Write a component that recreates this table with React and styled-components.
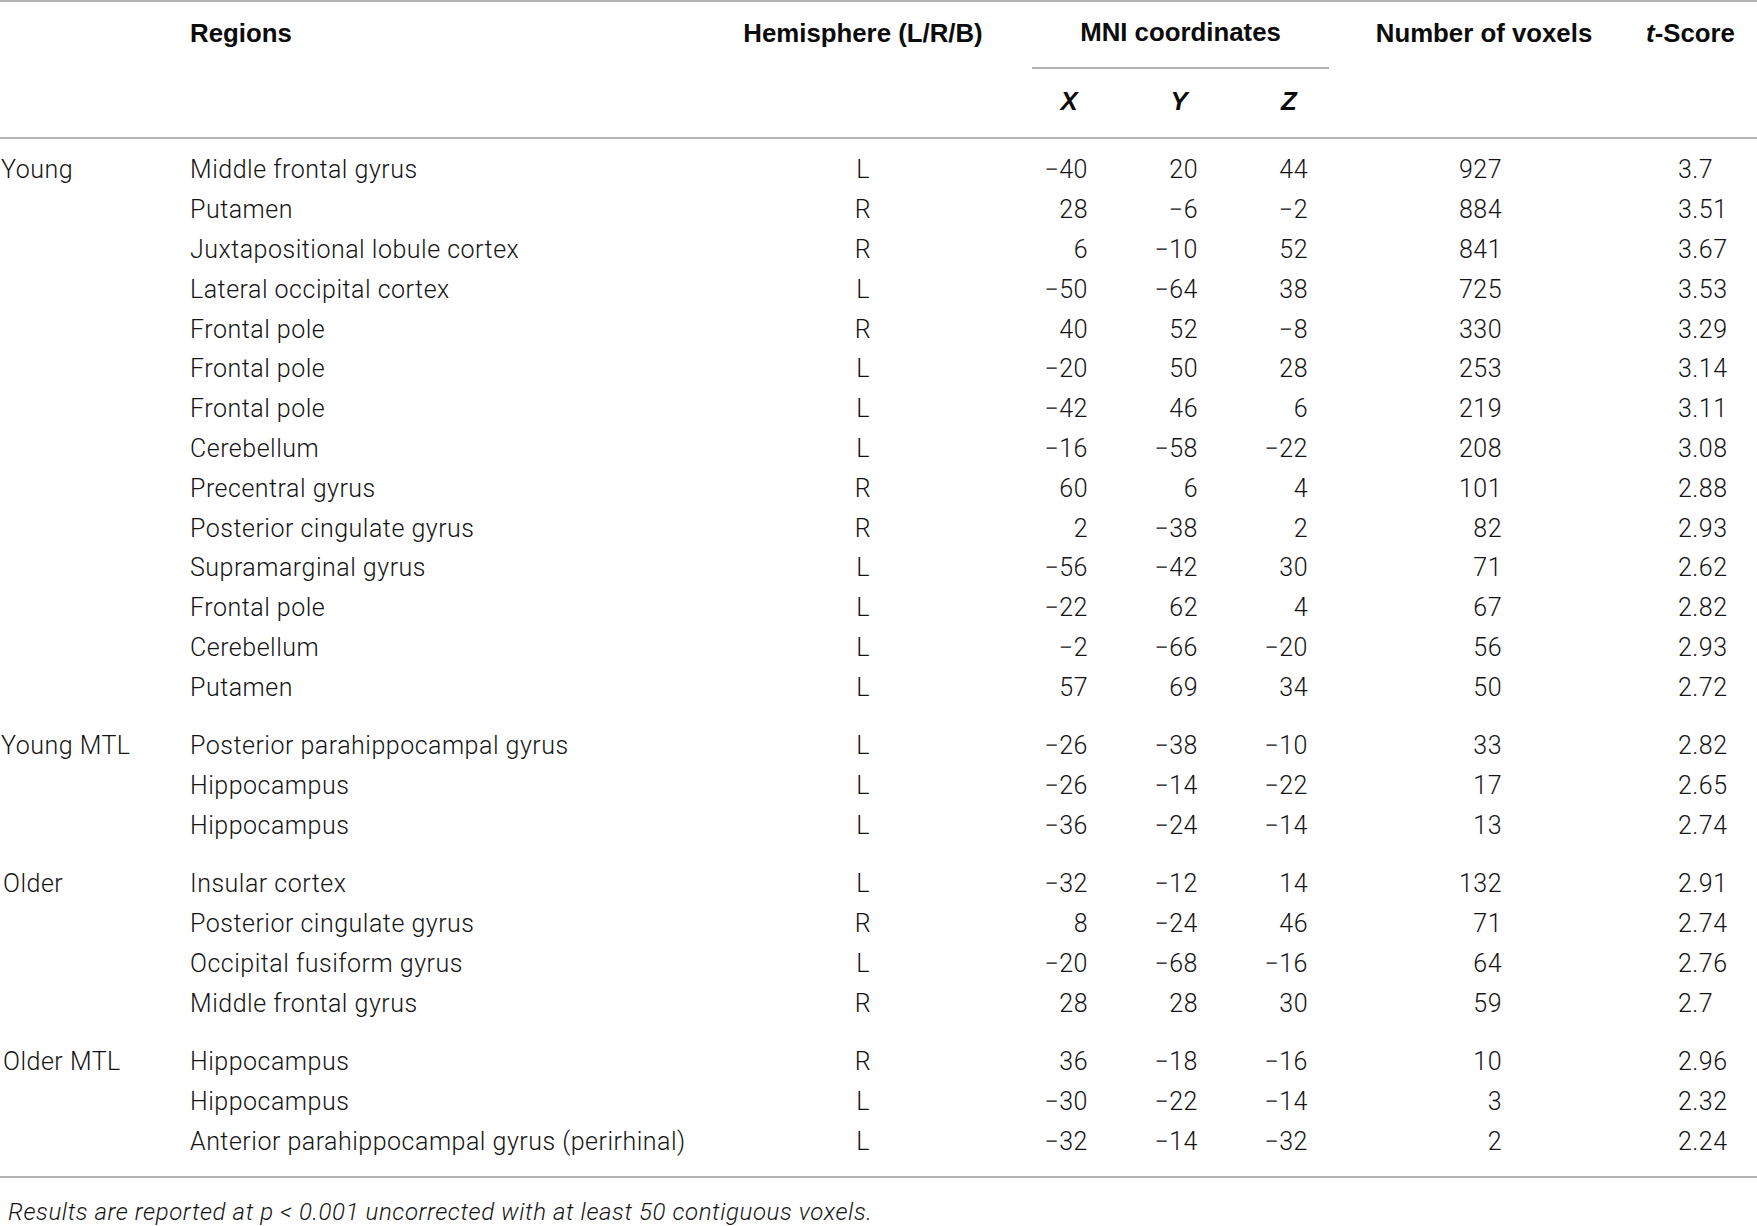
import React from "react";
import styled, { createGlobalStyle } from "styled-components";

const GlobalStyle = createGlobalStyle`
  html, body {
    margin: 0;
    padding: 0;
    background: #ffffff;
  }
  body {
    font-family: Roboto, "Liberation Sans", Arial, sans-serif;
    color: #141414;
  }
`;

const COLS = "190px 522px 302px 110px 110px 110px 280px 133px";
const RULE = "#b4b4b4";

const Table = styled.div`
  width: 1757px;
  border-top: 2px solid ${RULE};
`;

const Head = styled.div`
  display: grid;
  grid-template-columns: ${COLS};
  grid-template-rows: 67px 68px;
  border-bottom: 2px solid ${RULE};
  font-family: "Liberation Sans", Arial, sans-serif;
  font-weight: 700;
  font-size: 25.8px;
  color: #0c0c0c;
`;

const HeadCell = styled.div`
  grid-column: ${(p) => p.col};
  grid-row: ${(p) => p.row || "1"};
  text-align: ${(p) => p.align || "center"};
  line-height: 62px;
  white-space: nowrap;
`;

const GroupHead = styled(HeadCell)`
  margin: 0 15px 0 18px;
  border-bottom: 2px solid ${RULE};
  line-height: 60px;
`;

const Axis = styled(HeadCell)`
  font-style: italic;
  line-height: 64px;
`;

const Body = styled.div`
  padding: 11px 0 15px;
  border-bottom: 2px solid ${RULE};
`;

const Group = styled.div`
  & + & {
    margin-top: 18.7px;
  }
`;

const Row = styled.div`
  display: grid;
  grid-template-columns: ${COLS};
  height: 39.8px;
  align-items: center;
  font-size: 25px;
  font-weight: 300;
  letter-spacing: 0.5px;
`;

const Cell = styled.div`
  text-align: ${(p) => p.align || "left"};
  padding-left: ${(p) => p.pl || 0}px;
  padding-right: ${(p) => p.pr || 0}px;
  white-space: nowrap;
`;

const Note = styled.p`
  margin: 0;
  padding: 20px 0 0 8px;
  font-size: 24px;
  font-weight: 300;
  font-style: italic;
  letter-spacing: 0.6px;
`;

const groups = [
  {
    name: "Young",
    indent: 1,
    rows: [
      ["Middle frontal gyrus", "L", "−40", "20", "44", "927", "3.7"],
      ["Putamen", "R", "28", "−6", "−2", "884", "3.51"],
      ["Juxtapositional lobule cortex", "R", "6", "−10", "52", "841", "3.67"],
      ["Lateral occipital cortex", "L", "−50", "−64", "38", "725", "3.53"],
      ["Frontal pole", "R", "40", "52", "−8", "330", "3.29"],
      ["Frontal pole", "L", "−20", "50", "28", "253", "3.14"],
      ["Frontal pole", "L", "−42", "46", "6", "219", "3.11"],
      ["Cerebellum", "L", "−16", "−58", "−22", "208", "3.08"],
      ["Precentral gyrus", "R", "60", "6", "4", "101", "2.88"],
      ["Posterior cingulate gyrus", "R", "2", "−38", "2", "82", "2.93"],
      ["Supramarginal gyrus", "L", "−56", "−42", "30", "71", "2.62"],
      ["Frontal pole", "L", "−22", "62", "4", "67", "2.82"],
      ["Cerebellum", "L", "−2", "−66", "−20", "56", "2.93"],
      ["Putamen", "L", "57", "69", "34", "50", "2.72"],
    ],
  },
  {
    name: "Young MTL",
    indent: 1,
    rows: [
      ["Posterior parahippocampal gyrus", "L", "−26", "−38", "−10", "33", "2.82"],
      ["Hippocampus", "L", "−26", "−14", "−22", "17", "2.65"],
      ["Hippocampus", "L", "−36", "−24", "−14", "13", "2.74"],
    ],
  },
  {
    name: "Older",
    indent: 3,
    rows: [
      ["Insular cortex", "L", "−32", "−12", "14", "132", "2.91"],
      ["Posterior cingulate gyrus", "R", "8", "−24", "46", "71", "2.74"],
      ["Occipital fusiform gyrus", "L", "−20", "−68", "−16", "64", "2.76"],
      ["Middle frontal gyrus", "R", "28", "28", "30", "59", "2.7"],
    ],
  },
  {
    name: "Older MTL",
    indent: 3,
    rows: [
      ["Hippocampus", "R", "36", "−18", "−16", "10", "2.96"],
      ["Hippocampus", "L", "−30", "−22", "−14", "3", "2.32"],
      ["Anterior parahippocampal gyrus (perirhinal)", "L", "−32", "−14", "−32", "2", "2.24"],
    ],
  },
];

export default function App() {
  return (
    <>
      <GlobalStyle />
      <Table>
        <Head>
          <HeadCell col="2" align="left">Regions</HeadCell>
          <HeadCell col="3">Hemisphere (L/R/B)</HeadCell>
          <GroupHead col="4 / span 3">MNI coordinates</GroupHead>
          <HeadCell col="7">Number of voxels</HeadCell>
          <HeadCell col="8">
            <i>t</i>-Score
          </HeadCell>
          <Axis col="4" row="2">X</Axis>
          <Axis col="5" row="2">Y</Axis>
          <Axis col="6" row="2">Z</Axis>
        </Head>
        <Body>
          {groups.map((g) => (
            <Group key={g.name}>
              {g.rows.map((r, i) => (
                <Row key={i}>
                  <Cell pl={g.indent}>{i === 0 ? g.name : ""}</Cell>
                  <Cell>{r[0]}</Cell>
                  <Cell align="center">{r[1]}</Cell>
                  <Cell align="right" pr={36}>{r[2]}</Cell>
                  <Cell align="right" pr={36}>{r[3]}</Cell>
                  <Cell align="right" pr={36}>{r[4]}</Cell>
                  <Cell align="right" pr={122}>{r[5]}</Cell>
                  <Cell pl={54}>{r[6]}</Cell>
                </Row>
              ))}
            </Group>
          ))}
        </Body>
      </Table>
      <Note>
        Results are reported at <i>p</i> &lt; 0.001 uncorrected with at least 50 contiguous voxels.
      </Note>
    </>
  );
}
